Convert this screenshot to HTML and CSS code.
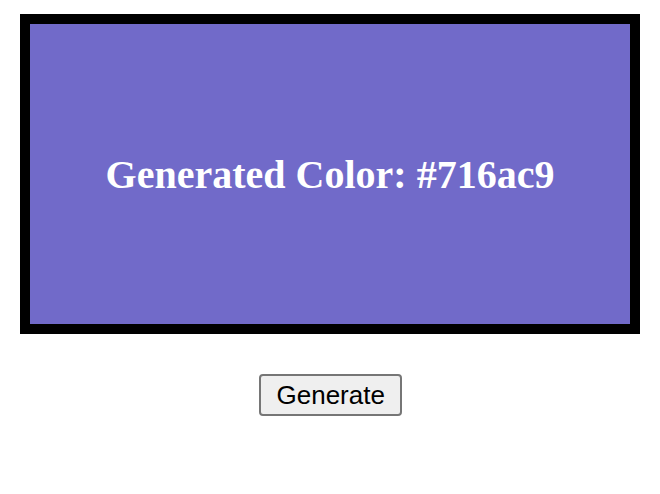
FILE: index.html
```html
<!DOCTYPE html>
<html>
<head>
<meta charset="utf-8">
<link rel="stylesheet" href="styles.css">
</head>
<body>
<div class="page">
  <div class="swatch">
    <h1 class="label">Generated Color: #716ac9</h1>
  </div>
  <button class="gen">Generate</button>
</div>
</body>
</html>
```
FILE: styles.css
```css
html, body { margin: 0; padding: 0; background: #fff; }
.page {
  padding: 14px 20px;
  display: flex;
  flex-direction: column;
  align-items: center;
  gap: 40px;
}
.swatch {
  width: 600px;
  height: 300px;
  border: 10px solid #000;
  background: #716ac9;
  display: flex;
  align-items: center;
  justify-content: center;
}
.label {
  margin: 0;
  color: #fff;
  font-family: "Liberation Serif", "Times New Roman", serif;
  font-weight: bold;
  font-size: 40px;
}
.gen {
  font-family: "Liberation Sans", Arial, sans-serif;
  font-size: 26px;
  color: #000;
  background: #efefef;
  border: 2px solid #767676;
  border-radius: 4px;
  padding: 4px 16px;
  width: 143px;
  height: 42px;
  line-height: 30px;
}
```
